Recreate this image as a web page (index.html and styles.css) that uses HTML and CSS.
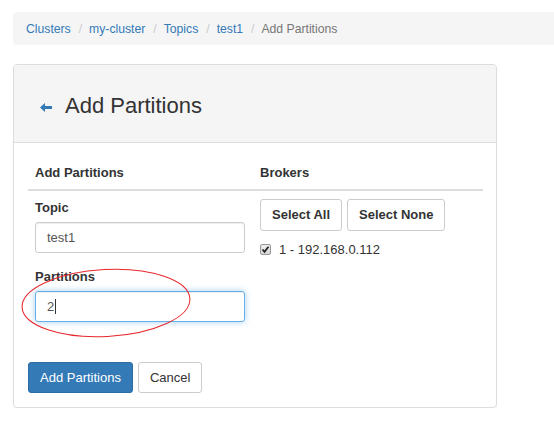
FILE: index.html
```html
<!DOCTYPE html>
<html>
<head>
<meta charset="utf-8">
<link rel="stylesheet" href="styles.css">
</head>
<body>
<div class="page">
  <ol class="breadcrumb">
    <li><a href="#">Clusters</a></li>
    <li class="sep">/</li>
    <li><a href="#">my-cluster</a></li>
    <li class="sep">/</li>
    <li><a href="#">Topics</a></li>
    <li class="sep">/</li>
    <li><a href="#">test1</a></li>
    <li class="sep">/</li>
    <li class="active">Add Partitions</li>
  </ol>

  <div class="panel">
    <div class="panel-heading">
      <svg class="back" width="12" height="9" viewBox="0 0 12 9"><path d="M0 4.5 L5 0 L5 3 L12 3 L12 6 L5 6 L5 9 Z" fill="#337ab7"/></svg>
      <h2 class="title">Add Partitions</h2>
    </div>
    <div class="panel-body">
      <table class="form-table">
        <thead>
          <tr><th class="col-left">Add Partitions</th><th class="col-right">Brokers</th></tr>
        </thead>
        <tbody>
          <tr>
            <td class="col-left">
              <div class="form-group">
                <label class="label">Topic</label>
                <div class="input">test1</div>
              </div>
              <div class="form-group annotated">
                <label class="label">Partitions</label>
                <div class="input focus">2<span class="caret"></span></div>
                <svg class="circle" width="172" height="72" viewBox="0 0 172 72"><ellipse cx="86" cy="36" rx="84" ry="33.5" transform="rotate(-3 86 36)" fill="none" stroke="#e8262b" stroke-width="1"/></svg>
              </div>
            </td>
            <td class="col-right">
              <div class="btn-row">
                <button class="btn btn-default bold">Select All</button>
                <button class="btn btn-default bold">Select None</button>
              </div>
              <div class="checkbox">
                <span class="check"><svg width="9" height="9" viewBox="0 0 9 9"><path d="M1.5 4.5 L3.5 6.8 L7.5 1.8" fill="none" stroke="#222" stroke-width="1.8"/></svg></span>
                <span>1 - 192.168.0.112</span>
              </div>
            </td>
          </tr>
        </tbody>
      </table>
      <div class="actions">
        <button class="btn btn-primary">Add Partitions</button>
        <button class="btn btn-default">Cancel</button>
      </div>
    </div>
  </div>
</div>
</body>
</html>
```

FILE: styles.css
```css
* { box-sizing: border-box; }
body {
  margin: 0;
  background: #fff;
  font-family: "Liberation Sans", Arial, sans-serif;
  color: #333;
  font-size: 13px;
}
.page {
  padding: 12px 0 0 13px;
}
.breadcrumb {
  list-style: none;
  margin: 0 0 19px 0;
  height: 33px;
  padding: 0 13px;
  display: flex;
  align-items: center;
  background: #f5f5f5;
  border-radius: 4px 0 0 4px;
  font-size: 12.2px;
}
.breadcrumb li { margin: 0; }
.breadcrumb a { color: #337ab7; text-decoration: none; }
.breadcrumb .sep { color: #ccc; padding: 0 7px 0 8px; }
.breadcrumb .active { color: #777; }

.panel {
  width: 484px;
  border: 1px solid #ddd;
  border-radius: 4px;
  box-shadow: 0 1px 1px rgba(0,0,0,0.05);
}
.panel-heading {
  height: 78px;
  background: #f5f5f5;
  border-bottom: 1px solid #ddd;
  border-radius: 3px 3px 0 0;
  display: flex;
  align-items: center;
  padding: 4px 0 0 26px;
}
.back { margin-right: 13px; margin-top: 3px; }
.title {
  margin: 0;
  font-size: 22px;
  font-weight: normal;
  color: #333;
}
.panel-body {
  padding: 15px 14px 14px 14px;
}
.form-table {
  width: 455px;
  border-collapse: collapse;
}
.form-table th {
  text-align: left;
  font-weight: bold;
  font-size: 13px;
  line-height: 16px;
  padding: 7px 7px 8px 7px;
  border-bottom: 2px solid #ddd;
}
.form-table td {
  vertical-align: top;
  padding: 8px 8px 0 7px;
}
.col-left { width: 225px; }
.col-right { width: 230px; }
.form-group { margin-bottom: 15px; position: relative; }
.label {
  display: block;
  font-weight: bold;
  font-size: 13px;
  line-height: 18px;
  margin-bottom: 5px;
}
.input {
  width: 210px;
  height: 31px;
  border: 1px solid #ccc;
  border-radius: 3px;
  padding: 0 11px;
  display: flex;
  align-items: center;
  font-size: 13px;
  color: #555;
  box-shadow: inset 0 1px 1px rgba(0,0,0,0.075);
}
.input.focus {
  border-color: #66afe9;
  box-shadow: inset 0 1px 1px rgba(0,0,0,0.075), 0 0 6px rgba(102,175,233,0.6);
}
.caret {
  display: inline-block;
  width: 1px;
  height: 15px;
  background: #333;
  margin-left: 1px;
}
.circle {
  position: absolute;
  left: -15px;
  top: -1px;
}
.btn-row { display: flex; gap: 5px; }
.btn {
  font-family: "Liberation Sans", Arial, sans-serif;
  font-size: 13px;
  height: 32px;
  padding: 0 11px;
  border-radius: 3px;
  border: 1px solid #ccc;
  background: #fff;
  color: #333;
  line-height: 30px;
}
.bold { font-weight: bold; }
.btn-primary {
  background: #337ab7;
  border-color: #2e6da4;
  color: #fff;
}
.checkbox {
  display: flex;
  align-items: center;
  margin-top: 11px;
  gap: 8px;
  font-size: 13px;
  color: #333;
}
.check {
  width: 11px;
  height: 11px;
  border: 1px solid #999;
  border-radius: 2px;
  background: linear-gradient(#eee, #d6d6d6);
  display: flex;
  align-items: center;
  justify-content: center;
}
.actions {
  display: flex;
  gap: 5px;
  margin-top: 25px;
}
.actions .btn { height: 31px; line-height: 29px; }
```
